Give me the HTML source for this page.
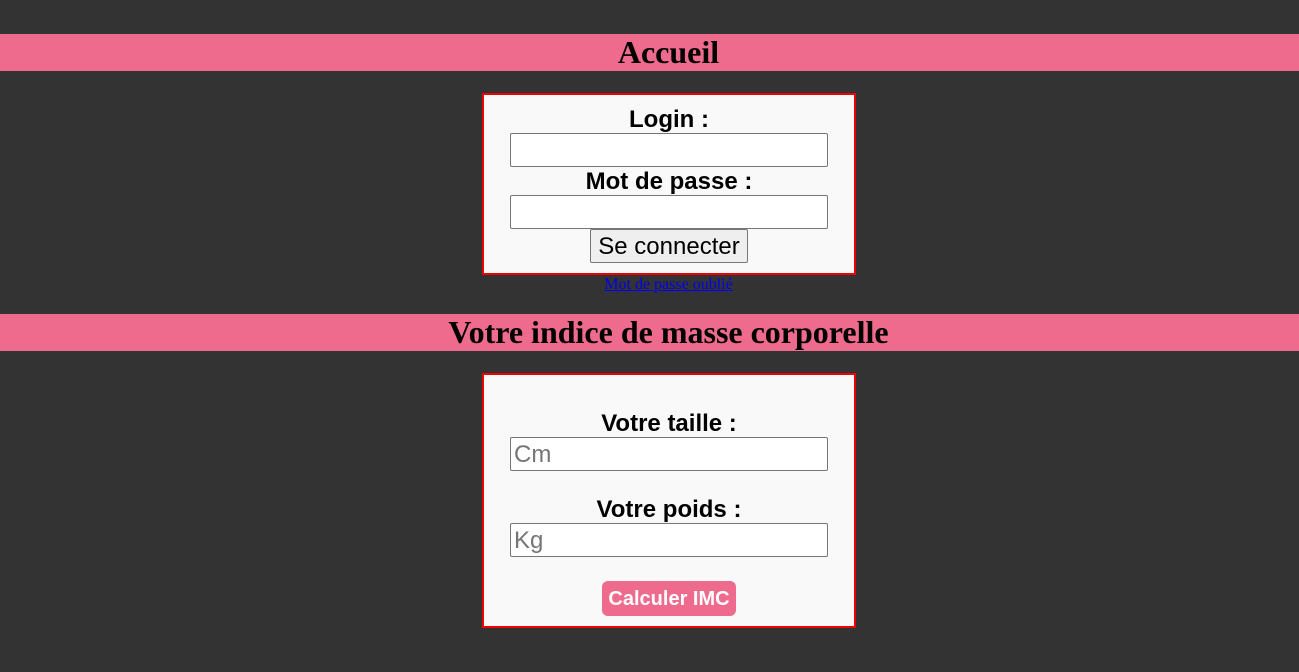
<!DOCTYPE html>
<html><head><meta charset="utf-8"><style>
*{box-sizing:border-box}
body{margin:0;width:1299px;height:672px;background:#333;position:relative;overflow:hidden;font-family:"Liberation Sans",sans-serif}
.bar{position:absolute;left:0;width:1299px;height:37px;background:#ee6b8e;text-align:center;font:bold 32px/37px "Liberation Serif",serif;color:#000;padding-left:38px}
.box{position:absolute;left:482px;width:374px;background:#f9f9f9;border:2px solid #e00}
.lbl{position:absolute;left:0;width:100%;text-align:center;font-weight:bold;font-size:24px;line-height:28px;color:#000}
.in{position:absolute;left:26px;width:318px;height:34px;background:#fff;border:1px solid #767676;border-radius:2px;font-size:24px;color:#757575;padding-left:3px;line-height:34px}
</style></head><body>
<div class="bar" style="top:34px">Accueil</div>
<div class="box" style="top:93px;height:182px">
 <div class="lbl" style="top:11px">Login :</div>
 <div class="in" style="top:38px"></div>
 <div class="lbl" style="top:73px">Mot de passe :</div>
 <div class="in" style="top:100px"></div>
 <div style="position:absolute;left:106px;top:134px;width:158px;height:34px;background:#efefef;border:1px solid #767676;border-radius:2px;text-align:center;font-size:24px;line-height:33px;color:#000">Se connecter</div>
</div>
<div style="position:absolute;top:275px;left:0;width:1299px;padding-left:38px;text-align:center;font:16px/20px 'Liberation Serif',serif"><a href="#" style="color:#00e">Mot de passe oublié</a></div>
<div class="bar" style="top:314px">Votre indice de masse corporelle</div>
<div class="box" style="top:373px;height:255px">
 <div class="lbl" style="top:35px">Votre taille :</div>
 <div class="in" style="top:62px">Cm</div>
 <div class="lbl" style="top:121px">Votre poids :</div>
 <div class="in" style="top:148px">Kg</div>
 <div style="position:absolute;left:118px;top:206px;width:134px;height:35px;background:#ee6b8e;border-radius:6px;color:#fff;font-weight:bold;font-size:20px;line-height:37px;text-align:center">Calculer IMC</div>
</div>
</body></html>
